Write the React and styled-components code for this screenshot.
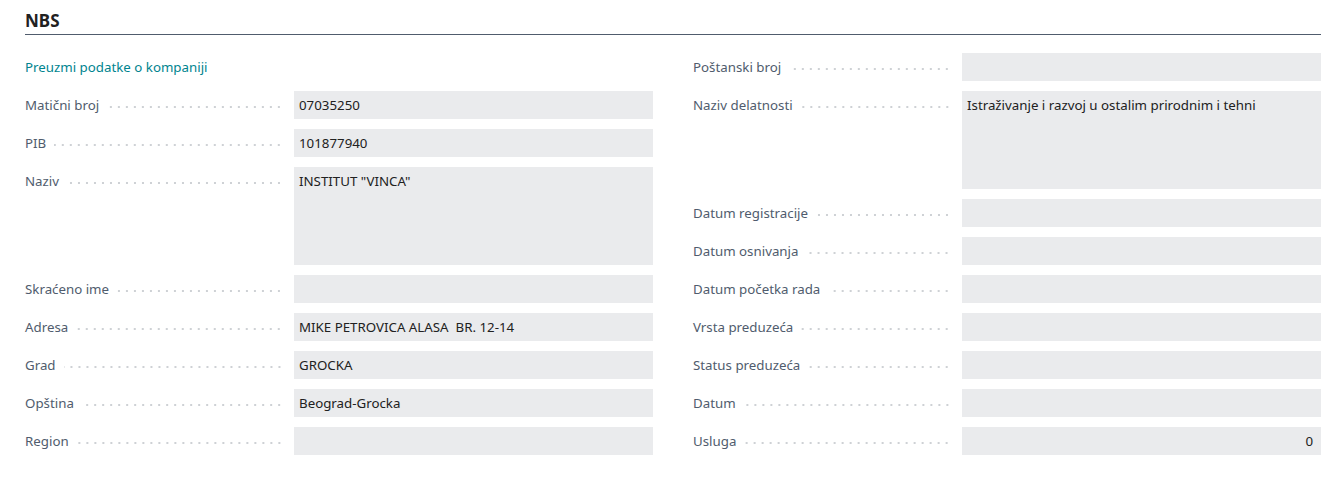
import styled, { createGlobalStyle } from "styled-components";

const leftFields = [
	{ label: "Matični broj", value: "07035250" },
	{ label: "PIB", value: "101877940" },
	{ label: "Naziv", value: 'INSTITUT "VINCA"', tall: true },
	{ label: "Skraćeno ime", value: "" },
	{ label: "Adresa", value: "MIKE PETROVICA ALASA  BR. 12-14" },
	{ label: "Grad", value: "GROCKA" },
	{ label: "Opština", value: "Beograd-Grocka" },
	{ label: "Region", value: "" },
];

const rightFields = [
	{ label: "Poštanski broj", value: "" },
	{ label: "Naziv delatnosti", value: "Istraživanje i razvoj u ostalim prirodnim i tehni", tall: true },
	{ label: "Datum registracije", value: "" },
	{ label: "Datum osnivanja", value: "" },
	{ label: "Datum početka rada", value: "" },
	{ label: "Vrsta preduzeća", value: "" },
	{ label: "Status preduzeća", value: "" },
	{ label: "Datum", value: "" },
	{ label: "Usluga", value: "0", numeric: true },
];

const GlobalStyle = createGlobalStyle`
	body {
		margin: 0;
		background: #ffffff;
		font-family: "Segoe UI", "Noto Sans", "Open Sans", sans-serif;
		font-size: 13.3px;
		color: #212121;
	}
`;

const Page = styled.div`
	padding: 0 7px 0 25px;
`;

const Header = styled.div`
	padding: 9px 0 2px;
	border-bottom: 1px solid #505c6d;
`;

const Title = styled.h2`
	margin: 0;
	font-size: 17px;
	line-height: 23px;
	font-weight: 700;
	color: #212121;
`;

const Columns = styled.div`
	display: grid;
	grid-template-columns: 1fr 1fr;
	column-gap: 40px;
	margin-top: 18px;
`;

const Column = styled.div`
	display: flex;
	flex-direction: column;
	gap: 10px;
`;

const Row = styled.div`
	display: grid;
	grid-template-columns: 269px 1fr;
	height: ${(props) => (props.tall ? "98px" : "28px")};
`;

const LabelCell = styled.div`
	display: flex;
	align-items: center;
	height: 28px;
	padding-right: 11px;
	color: #505c6d;
	white-space: nowrap;
`;

const Leader = styled.span`
	flex: 1;
	height: 2px;
	margin: 3px 0 0 8px;
	background-image: radial-gradient(circle, #cdd0d4 0.7px, transparent 1px);
	background-size: 8px 2px;
	background-position: right center;
	background-repeat: repeat-x;
`;

const Value = styled.div`
	background: #eaebed;
	padding: 0 ${(props) => (props.numeric ? "8px" : "5px")};
	line-height: 28px;
	color: #212121;
	text-align: ${(props) => (props.numeric ? "right" : "left")};
	white-space: pre;
	overflow: hidden;
`;

const LinkRow = styled.div`
	display: flex;
	align-items: center;
	height: 28px;
`;

const Link = styled.a`
	color: #00848f;
	text-decoration: none;
	cursor: pointer;
`;

const Field = ({ label, value, tall, numeric }) => (
	<Row tall={tall}>
		<LabelCell>
			{label}
			<Leader />
		</LabelCell>
		<Value numeric={numeric}>{value}</Value>
	</Row>
);

const App = () => (
	<Page>
		<GlobalStyle />
		<Header>
			<Title>NBS</Title>
		</Header>
		<Columns>
			<Column>
				<LinkRow>
					<Link>Preuzmi podatke o kompaniji</Link>
				</LinkRow>
				{leftFields.map((f) => (
					<Field key={f.label} {...f} />
				))}
			</Column>
			<Column>
				{rightFields.map((f) => (
					<Field key={f.label} {...f} />
				))}
			</Column>
		</Columns>
	</Page>
);

export default App;
